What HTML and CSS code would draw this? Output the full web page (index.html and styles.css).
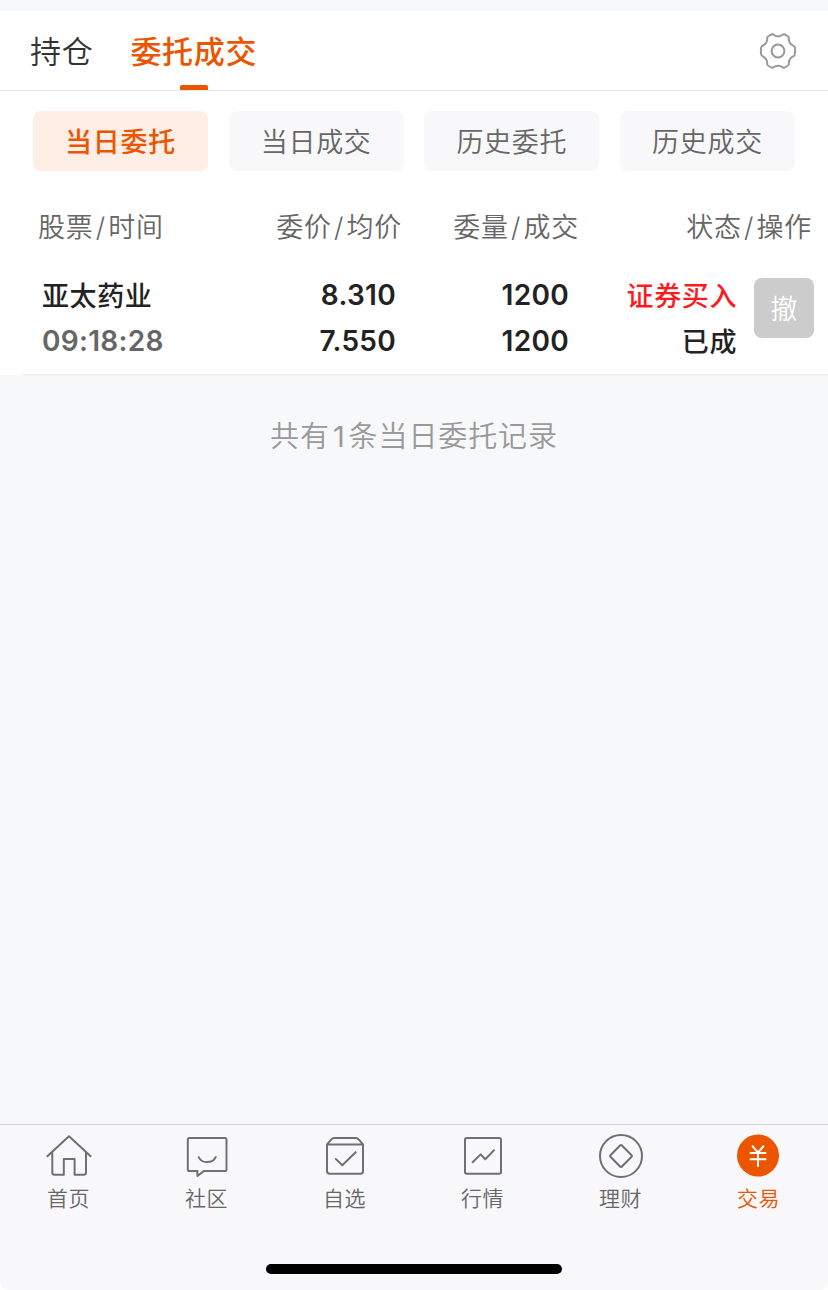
FILE: index.html
```html
<!DOCTYPE html>
<html lang="zh-CN">
<head>
<meta charset="utf-8">
<title>委托成交</title>
<link rel="stylesheet" href="styles.css">
</head>
<body>
<div class="screen">
  <header class="topbar">
    <nav class="tabs">
      <span class="tab">持仓</span>
      <span class="tab tab-active">委托成交</span>
    </nav>
    <svg class="gear" viewBox="0 0 40 40" width="40" height="40">
      <path d="M14.2 3.1L12.6 3.9Q9.4 5.5 9.2 6.4C9.6 10.4 7.5 13.6 4 15.2C2.4 16 2.6 24 4 24.8C7.5 26.4 9.6 29.6 9.2 33.6Q9.4 34.5 13.7 36.6Q14.7 37 15.5 36.2C18 34.1 22 34.1 24.5 36.2Q25.3 37 26.3 36.6Q30.6 34.5 30.8 33.6C30.4 29.6 32.5 26.4 36 24.8C37.4 24 37.6 16 36 15.2C32.5 13.6 30.4 10.4 30.8 6.4Q30.6 5.5 26.3 3.4Q25.3 3 24.5 3.8C22 5.9 18 5.9 15.5 3.8Q14.9 3 14.2 3.1Z"/>
      <circle cx="20" cy="20" r="6.4"/>
    </svg>
  </header>

  <main class="orders">
    <div class="filters">
      <span class="filter filter-active">当日委托</span>
      <span class="filter">当日成交</span>
      <span class="filter">历史委托</span>
      <span class="filter">历史成交</span>
    </div>
    <div class="heads">
      <span>股票<i>/</i>时间</span>
      <span>委价<i>/</i>均价</span>
      <span>委量<i>/</i>成交</span>
      <span>状态<i>/</i>操作</span>
    </div>
    <div class="order">
      <div class="cell"><span>亚太药业</span><span class="num time">09:18:28</span></div>
      <div class="cell"><span class="num">8.310</span><span class="num">7.550</span></div>
      <div class="cell"><span class="num">1200</span><span class="num">1200</span></div>
      <div class="cell"><span class="buy">证券买入</span><span>已成</span></div>
      <span class="cancel">撤</span>
    </div>
  </main>

  <p class="summary">共有<span class="count">1</span>条当日委托记录</p>

  <footer class="bottom">
    <nav class="nav">
      <div class="item">
        <svg viewBox="0 0 48 46" width="48" height="46"><path d="M1.8 23.8L24 3.3L46.2 23.8M7.3 19.5V39.5Q7.3 41.7 9.5 41.7H18.8V26H29.6V41.7H38.8Q41 41.7 41 39.5V19.5"/></svg>
        <span>首页</span>
      </div>
      <div class="item">
        <svg viewBox="0 0 48 46" width="48" height="46"><path d="M6.4 4.9H41.6Q43.5 4.9 43.5 6.8V36.2Q43.5 38.1 41.6 38.1H20.8L14.4 43V38.1H6.4Q4.8 38.1 4.8 36.2V6.8Q4.8 4.9 6.4 4.9Z"/><path d="M15.4 23.5C18.2 31 29.8 31 33.1 23.3"/></svg>
        <span>社区</span>
      </div>
      <div class="item">
        <svg viewBox="0 0 48 46" width="48" height="46"><path d="M6 11.4L10.4 6.3Q11.5 4.9 13 4.9H35Q36.5 4.9 37.6 6.3L42 11.4V38Q42 40.8 39.5 40.8H8.5Q6 40.8 6 38ZM6 11.4H42M14.2 25.4L21.3 32.3L35.2 18.8"/></svg>
        <span>自选</span>
      </div>
      <div class="item">
        <svg viewBox="0 0 48 46" width="48" height="46"><rect x="6" y="4.9" width="36" height="35.9" rx="1.8"/><path d="M13 29.7L21.7 21.4L26.3 26.3L35.6 16.6"/></svg>
        <span>行情</span>
      </div>
      <div class="item">
        <svg viewBox="0 0 48 46" width="48" height="46"><circle cx="24" cy="23" r="21"/><path d="M23.3 12.3Q24 11.6 24.7 12.3L34.6 22.3Q35.3 23 34.6 23.7L24.7 33.7Q24 34.4 23.3 33.7L13.4 23.7Q12.7 23 13.4 22.3Z"/></svg>
        <span>理财</span>
      </div>
      <div class="item item-active">
        <svg viewBox="1 0 48 46" width="48" height="46"><circle class="coin" cx="24" cy="22.5" r="21"/><path class="yen" d="M18.1 12.7L24 19.7L29.9 12.7M15.7 20H32.3M15.7 26.2H32.3M24 19.7V33.7"/></svg>
        <span>交易</span>
      </div>
    </nav>
    <div class="home-bar"></div>
  </footer>
</div>
</body>
</html>
```
FILE: styles.css
```css
body {
  margin: 0;
  background: #fff;
  font-family: "Noto Sans CJK SC", sans-serif;
}

.screen {
  box-sizing: border-box;
  display: flex;
  flex-direction: column;
  width: 828px;
  height: 1290px;
  padding-top: 11px;
  overflow: hidden;
  border-radius: 0 0 9px 9px;
  background: #f7f8fa;
  color: #666;
  font-weight: 350;
}

svg {
  fill: none;
  stroke: #707072;
  stroke-width: 2;
  stroke-linejoin: round;
}

.topbar {
  box-sizing: border-box;
  display: flex;
  justify-content: space-between;
  height: 80px;
  padding: 0 30px;
  border-bottom: 1px solid #ebebeb;
  background: #fff;
}

.tabs {
  display: flex;
  gap: 37px;
  font-size: 31px;
  line-height: 78px;
  letter-spacing: 0.7px;
  color: #333;
}

.tab-active {
  display: flex;
  flex-direction: column;
  align-items: center;
  font-weight: 500;
  color: #eb5500;
}

.tab-active::after {
  content: "";
  width: 28px;
  height: 5px;
  margin-top: -4px;
  border-radius: 2px 2px 0 0;
  background: #eb5500;
}

.gear {
  margin: 20px 0 0;
  stroke: #999;
}

.orders {
  height: 284px;
  background: #fff;
}

.filters {
  display: flex;
  justify-content: space-between;
  padding: 20px 33px 0;
}

.filter {
  width: 175px;
  height: 60px;
  border-radius: 8px;
  background: #f8f8fa;
  font-size: 27px;
  line-height: 59px;
  letter-spacing: 0.7px;
  text-align: center;
}

.filter-active {
  background: #feeee5;
  color: #eb5500;
  font-weight: 500;
}

.heads {
  display: grid;
  grid-template-columns: 187px 177px 177px 233px;
  padding: 35px 0 0 38px;
  font-size: 27px;
  line-height: 40px;
  letter-spacing: 0.7px;
  text-align: right;
}

.heads i {
  margin: 0 2.4px;
  font-family: Inter, sans-serif;
  font-style: normal;
}

.heads span:first-child {
  text-align: left;
}

.order {
  display: grid;
  grid-template-columns: 178px 176px 173px 168px 60px;
  margin-left: 21px;
  height: 126px;
  padding-left: 21px;
  border-bottom: 1px solid #ebebeb;
  color: #222;
  font-size: 27px;
  font-weight: 500;
  letter-spacing: 0.6px;
}

.orders {
  height: 284px;
}

.cell {
  display: flex;
  flex-direction: column;
  padding-top: 24px;
  line-height: 46px;
  text-align: right;
}

.cell:first-child {
  text-align: left;
}

.num {
  font-family: Inter, sans-serif;
  font-size: 28px;
  font-weight: 600;
  letter-spacing: 0.3px;
}

.time {
  color: #666;
}

.buy {
  color: #fc1c1f;
}

.cancel {
  width: 60px;
  height: 60px;
  margin: 30px 0 0 17px;
  border-radius: 8px;
  background: #ccc;
  color: #fff;
  font-weight: 350;
  line-height: 59px;
  letter-spacing: 0;
  text-align: center;
}

.summary {
  margin: 39px 0 0;
  color: #999;
  font-size: 29px;
  line-height: 40px;
  letter-spacing: 0.9px;
  text-align: center;
}

.count {
  margin: 0 3px;
  font-family: Inter, sans-serif;
  font-weight: 400;
}

.bottom {
  box-sizing: border-box;
  height: 166px;
  margin-top: auto;
  border-top: 1px solid #d2d3d5;
  background: #f8f8fa;
}

.nav {
  display: grid;
  grid-template-columns: repeat(6, 138px);
  height: 139px;
}

.item {
  display: flex;
  flex-direction: column;
  align-items: center;
  padding-top: 8px;
  font-size: 21px;
  line-height: 30px;
  letter-spacing: 0.4px;
}

.item span {
  margin: 3px 1px 0 0;
}

.item-active {
  color: #eb5500;
}

.coin {
  fill: #eb5500;
  stroke: none;
}

.yen {
  stroke: #fff;
}

.home-bar {
  width: 296px;
  height: 10px;
  margin: 0 auto;
  border-radius: 5px;
  background: #000;
}
```
